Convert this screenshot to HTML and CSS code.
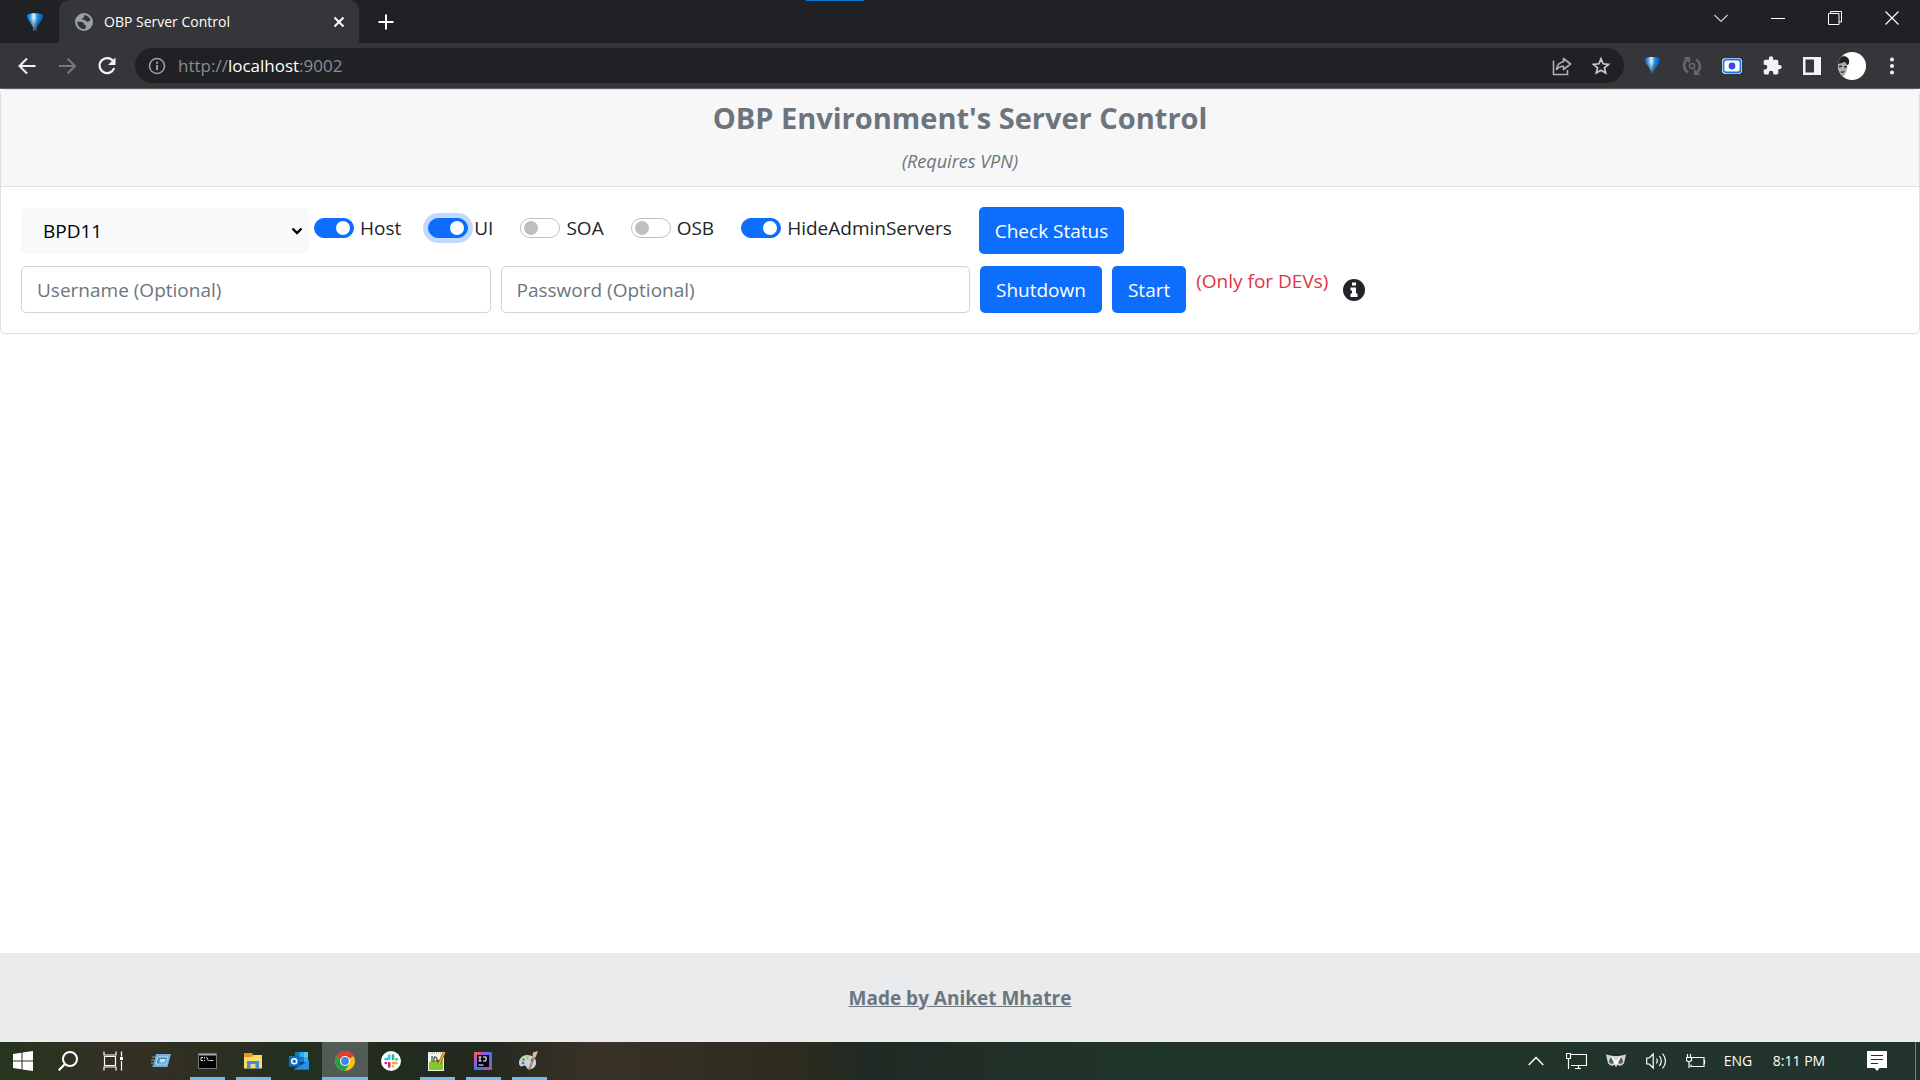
FILE: index.html
```html
<!DOCTYPE html>
<html lang="en">
<head>
<meta charset="utf-8">
<meta name="viewport" content="width=device-width, initial-scale=1">
<title>OBP Server Control</title>
<link rel="stylesheet" href="styles.css">
</head>
<body>
<svg class="defs" aria-hidden="true">
  <defs>
    <linearGradient id="balloon-fill" x1="0" x2="1" y1="0" y2="0">
      <stop offset="0" stop-color="#0a5fc0"/><stop offset=".2" stop-color="#2a9df0"/><stop offset=".42" stop-color="#e8f8ff"/><stop offset=".65" stop-color="#1b8fe8"/><stop offset="1" stop-color="#0757a8"/>
    </linearGradient>
    <linearGradient id="balloon-shade" x1="0" x2="0" y1="0" y2="1">
      <stop offset=".3" stop-color="#04264d" stop-opacity="0"/><stop offset="1" stop-color="#04264d" stop-opacity=".85"/>
    </linearGradient>
    <linearGradient id="idea-fill" x1="0" x2="1" y1="0" y2="1">
      <stop offset="0" stop-color="#f06a2c"/><stop offset=".3" stop-color="#b44fd0"/><stop offset=".55" stop-color="#2583f5"/><stop offset="1" stop-color="#e8368f"/>
    </linearGradient>
    <symbol id="balloon" viewBox="0 0 18 20">
      <path d="M1 3C3 .5 15 .5 17 3c.6 2.600-1.400 5.500-4 8.500L10.500 16v3h-3v-3L5 11.500C2.400 8.500.4 5.600 1 3z" fill="url(#balloon-fill)"/>
      <path d="M1 3C3 .5 15 .5 17 3c.6 2.600-1.400 5.500-4 8.500L10.500 16v3h-3v-3L5 11.500C2.400 8.500.4 5.600 1 3z" fill="url(#balloon-shade)"/>
    </symbol>
  </defs>
</svg>

<header class="browser">
  <div class="tab-strip">
    <button class="pinned-tab" aria-label="Pinned tab"><svg width="18" height="20"><use href="#balloon"/></svg></button>
    <div class="tab">
      <svg width="18" height="18" viewBox="0 0 18 18"><circle cx="9" cy="9" r="9" fill="#9aa0a6"/><path d="M9 2c3 .2 5.600 2.200 6.600 5-1.500.7-2.200 2-3.600 1.800-1.200-.2-.8-1.500-2-1.800-1.200-.2-2.600.2-2.800-1C7.100 4.900 9 5 9 3.800zM2.200 8.500c2 .3 5.200.2 6.300 1.200 1 1 .2 1.900 1.600 2.400 1.200.5 1.500 1.700-.1 3.900-4.200.4-7.800-2.900-7.800-7.500z" fill="#35363a"/></svg>
      <span class="tab-title">OBP Server Control</span>
      <button class="tab-close" aria-label="Close tab"><svg width="12" height="12" viewBox="0 0 12 12"><path d="M1.500 1.500l9 9M10.500 1.500l-9 9" stroke="#fff" stroke-width="2"/></svg></button>
    </div>
    <button class="new-tab" aria-label="New tab"><svg width="16" height="16" viewBox="0 0 16 16"><path d="M8 .5v15M.5 8h15" stroke="#fff" stroke-width="2"/></svg></button>
    <div class="window-buttons">
      <button aria-label="Search tabs"><svg width="14" height="14" viewBox="0 0 14 14"><path d="M.5 4L7 10.500 13.500 4" fill="none" stroke="#ccc" stroke-width="1.200"/></svg></button>
      <button aria-label="Minimize"><svg width="14" height="14" viewBox="0 0 14 14"><path d="M0 7.500h14" stroke="#fff"/></svg></button>
      <button aria-label="Restore"><svg width="14" height="14" viewBox="0 0 14 14"><path d="M.5 2.500h10.500v11H.5zM2.500 2.500v-2h11v10.500h-2.500" fill="none" stroke="#fff"/></svg></button>
      <button aria-label="Close window"><svg width="14" height="14" viewBox="0 0 14 14"><path d="M.5.5l13 13M13.500.5l-13 13" stroke="#fff" stroke-width="1.200"/></svg></button>
    </div>
    <span class="top-marker"></span>
  </div>

  <div class="toolbar">
    <button aria-label="Back"><svg width="24" height="24" viewBox="0 0 24 24"><path d="M20.500 12H5M12 4.500L4.500 12l7.500 7.500" fill="none" stroke="#f1f3f4" stroke-width="2"/></svg></button>
    <button aria-label="Forward"><svg width="24" height="24" viewBox="0 0 24 24"><path d="M4 12h15.500M12.500 4.500L20 12l-7.500 7.500" fill="none" stroke="#77787b" stroke-width="2"/></svg></button>
    <button aria-label="Reload"><svg width="24" height="24" viewBox="0 0 24 24"><path d="M18.200 7.200A7.500 7.500 0 1 0 19.200 14" fill="none" stroke="#f1f3f4" stroke-width="2.200"/><path d="M20.500 3.500V11H13z" fill="#f1f3f4"/></svg></button>
    <div class="omnibox">
      <svg width="18" height="18" viewBox="0 0 18 18"><circle cx="9" cy="9" r="7.500" fill="none" stroke="#9aa0a6" stroke-width="1.600"/><path d="M9 8v5M9 4.800v2" stroke="#9aa0a6" stroke-width="2"/></svg>
      <div class="url" role="textbox" aria-label="Address"><span>http://</span><b>localhost</b><span>:9002</span></div>
      <button aria-label="Share"><svg width="24" height="24" viewBox="0 0 24 24"><path d="M3.500 6.500v14h14v-4.500" fill="none" stroke="#aeb0b3" stroke-width="1.600"/><path d="M13.500 4.500l7 5.500-7 5.500v-3.300c-3.200 0-5.300 1-7 3.300.4-4.200 2.700-7 7-7.700z" fill="none" stroke="#aeb0b3" stroke-width="1.600" stroke-linejoin="round"/></svg></button>
      <button aria-label="Bookmark"><svg width="24" height="24" viewBox="0 0 24 24"><path d="M12 4.800l2.100 5 5.400.5-4.100 3.500 1.300 5.300-4.700-2.800-4.700 2.800 1.300-5.300-4.100-3.500 5.400-.5z" fill="none" stroke="#c6c8ca" stroke-width="1.700"/></svg></button>
    </div>
    <button aria-label="Balloon extension"><svg width="17" height="19"><use href="#balloon"/></svg></button>
    <button aria-label="Refresh extension"><svg width="24" height="24" viewBox="0 0 24 24"><g fill="none" stroke="#66676a" stroke-width="2.600"><path d="M8 18.500A8 8 0 0 1 6.500 6M16 5.500A8 8 0 0 1 17.500 18"/><circle cx="12" cy="12" r="2.500" stroke-width="1.600"/></g><path d="M3.500 3H10v6.500zM20.500 21H14v-6.500z" fill="#66676a"/></svg></button>
    <button aria-label="Recorder extension"><svg width="22" height="18" viewBox="0 0 22 18"><rect x="1" y="1" width="20" height="16" rx="4" fill="#fff"/><rect x="2.500" y="2.500" width="17" height="13" rx="3" fill="#fff" stroke="#1677f2" stroke-width="1.800"/><circle cx="11" cy="9" r="3.400" fill="#4747cf"/></svg></button>
    <button aria-label="Extensions"><svg width="24" height="24" viewBox="0 0 24 24"><path d="M20.500 11H19V7c0-1.100-.9-2-2-2h-4V3.500a2.500 2.500 0 0 0-5 0V5H4c-1.100 0-2 .9-2 2v3.800h1.500a2.700 2.700 0 0 1 0 5.400H2V20c0 1.100.9 2 2 2h3.800v-1.500a2.700 2.700 0 0 1 5.400 0V22H17c1.100 0 2-.9 2-2v-4h1.500a2.500 2.500 0 0 0 0-5z" fill="#f1f3f4" transform="translate(2 1.500) scale(.86)"/></svg></button>
    <button aria-label="Side panel"><svg width="18" height="18" viewBox="0 0 18 18"><path fill="#f1f3f4" fill-rule="evenodd" d="M0 0h18v18H0zM2.500 2.500v13H11v-13z"/></svg></button>
    <button aria-label="Profile"><svg width="28" height="28" viewBox="0 0 28 28"><clipPath id="avatar"><circle cx="14" cy="14" r="14"/></clipPath><g clip-path="url(#avatar)"><path fill="#fff" d="M0 0h28v28H0z"/><path d="M0 6c4-4 9-3 11 2 .6 4-1 5-2 5 .6 4 0 7-4 12L0 20z" fill="#aaa"/><path d="M0 7c4-4 9-3.500 11 1 .5 3-.5 5-2 5-1-3-3-4-5-2L0 12zM1 14l3-.5v1.500l-3 .3zM6 14h3v1.500H6zM2 20l5-1-2 2zM0 21l5 4H0z" fill="#222"/></g></svg></button>
    <button aria-label="Menu"><svg width="24" height="24" viewBox="0 0 24 24" fill="#f1f3f4"><circle cx="12" cy="5.500" r="2"/><circle cx="12" cy="12" r="2"/><circle cx="12" cy="18.500" r="2"/></svg></button>
  </div>
</header>

<main class="page">
  <section class="card">
    <div class="card-header">
      <h1>OBP Environment's Server Control</h1>
      <p>(Requires VPN)</p>
    </div>
    <form class="card-body">
      <div class="row">
        <div class="select-wrap">
          <select class="environment" aria-label="Environment"><option>BPD11</option></select>
          <svg class="select-arrow" width="12" height="8" viewBox="0 0 12 8"><path d="M1.500 1.500L6 6l4.500-4.500" fill="none" stroke="#000" stroke-width="2.400"/></svg>
        </div>
        <div class="switches">
          <label class="switch"><input type="checkbox" checked>Host</label>
          <label class="switch"><input type="checkbox" class="is-focused" checked>UI</label>
          <label class="switch"><input type="checkbox">SOA</label>
          <label class="switch"><input type="checkbox">OSB</label>
          <label class="switch"><input type="checkbox" checked>HideAdminServers</label>
        </div>
        <button type="button" class="btn">Check Status</button>
      </div>
      <div class="row credentials">
        <input class="field" type="text" placeholder="Username (Optional)" aria-label="Username">
        <input class="field" type="password" placeholder="Password (Optional)" aria-label="Password">
        <button type="button" class="btn">Shutdown</button>
        <button type="button" class="btn">Start</button>
        <span class="note">(Only for DEVs)</span>
        <button type="button" class="info" aria-label="Information"><svg width="22" height="22" viewBox="0 0 22 22"><circle cx="11" cy="11" r="11" fill="#212529"/><path d="M9 3.500h4v3H9zM7.500 8.500H13v6h1.500V18h-7v-3.500H9V11.500H7.500z" fill="#fff"/></svg></button>
      </div>
    </form>
  </section>
</main>

<footer class="page-footer"><a href="#">Made by Aniket Mhatre</a></footer>

<nav class="taskbar" aria-label="Taskbar">
  <div class="system-items">
    <button aria-label="Start menu"><svg width="20" height="20" viewBox="0 0 20 20"><path fill="#fff" d="M0 3l8.500-1.200v7.700H0zM9.500 1.600L20 0v9.500H9.500zM0 10.500h8.500v7.700L0 17zM9.500 10.500H20V20L9.500 18.400z"/></svg></button>
    <button aria-label="Search"><svg width="20" height="20" viewBox="0 0 20 20"><circle cx="12" cy="8" r="7" fill="none" stroke="#fff" stroke-width="2"/><path d="M7 13l-6.300 6.300" stroke="#fff" stroke-width="2.200"/></svg></button>
    <button aria-label="Task view"><svg width="20" height="20" viewBox="0 0 20 20"><path d="M1 .5v3.500h12V.5M1.500 5.500h11v9h-11zM1 19.500V16h12v3.500M18.500.5v5M18.500 10v9.500" fill="none" stroke="#fff" stroke-width="1.200"/><path d="M17 6h3v3h-3z" fill="#fff"/></svg></button>
  </div>
  <div class="apps">
    <button aria-label="Run"><svg width="20" height="16" viewBox="0 0 20 16"><path d="M1 4h4M0 7h5M0 10h4M1 13h3" stroke="#7fa9c8"/><path d="M5 1h15l-3.500 13H2z" fill="#78afd7"/><path d="M7 4h10l-2 7H5z" fill="#3d82bd" stroke="#b8dcf3"/><path d="M9 6h6l-1 3.500H8z" fill="#b8e0f8"/></svg></button>
    <button class="open" aria-label="Command Prompt"><svg width="19" height="16" viewBox="0 0 19 16"><path fill="#050505" stroke="#777" d="M.5.500h18v15H.5z"/><path fill="#aaa" d="M1 1h17v1.500H1z"/><path d="M5 4.500H3v3h2M6.500 4v1.500M6.500 7v1M8.500 4l2 4M11.500 7.500h4" fill="none" stroke="#ddd"/></svg></button>
    <button class="open" aria-label="File Explorer"><svg width="19" height="16" viewBox="0 0 19 16"><path fill="#d99a22" d="M0 0h8l1.500 2H18v5H0z"/><path fill="#ffd867" d="M0 4h8l1.500-2H18v13.500H0z"/><path fill="#3c93dd" d="M3 8h12v7.500h-3.500V11h-5v4.500H3z"/></svg></button>
    <button aria-label="Outlook"><svg width="20" height="18" viewBox="0 0 20 18"><path fill="#123f7a" d="M5 8h15v10H5z"/><path fill="#1378c8" d="M6 0h13v10H6z"/><path fill="#35a8ec" d="M10.500 0H15v5h-4.500zM15 5h4v5h-4z"/><path fill="#54cbf7" d="M15 0h4v5h-4z"/><path fill="#2394df" d="M5 17.500L20 8v9.500z"/><path fill="#0f6cbf" d="M0 4h10.500v10.500H0z"/><circle cx="5.200" cy="9.300" r="2.500" fill="none" stroke="#fff" stroke-width="1.500"/></svg></button>
    <button class="open active" aria-label="Chrome"><svg width="20" height="20" viewBox="0 0 20 20"><circle cx="10" cy="10" r="10" fill="#fbc116"/><path d="M10 10L1.340 5A10 10 0 0 1 18.660 5z" fill="#e33b2e"/><path d="M1.340 5A10 10 0 0 0 10 20l4.300-7.500L10 10H4.200z" fill="#2a9d4a"/><path d="M1.340 5L5.700 12.500 10 10V5z" fill="#2a9d4a"/><path d="M1.340 5A10 10 0 0 1 18.660 5H10L5.500 8z" fill="#e33b2e"/><circle cx="10" cy="10" r="5" fill="#fff"/><circle cx="10" cy="10" r="3.900" fill="#3f83f0"/></svg></button>
    <button aria-label="Slack"><svg width="20" height="20" viewBox="0 0 20 20"><circle cx="10" cy="10" r="10" fill="#fff"/><g fill="none" stroke-width="2.600" stroke-linecap="round"><path d="M8.200 4.500v3.300M4.500 8h3.200" stroke="#36c5f0"/><path d="M12 4.500v3.500M15.500 8.300h-.2" stroke="#2eb67d"/><path d="M12 12h3.500M12 15.500v-.2" stroke="#ecb22e"/><path d="M8.200 12v3.500M4.700 12h.2" stroke="#e01e5a"/></g></svg></button>
    <button class="open" aria-label="Notepad++"><svg width="18" height="20" viewBox="0 0 18 20"><path fill="#f5f5ed" d="M0 1h16v19H0z"/><path fill="#80cc28" d="M1 11l14-3v11H1z"/><path d="M2 2h12" stroke="#888" stroke-dasharray="1 1"/><path d="M4 5v6M6 6v5M6 6h2l1 2v3M10 9v2M12 9v2" fill="none" stroke="#222"/><path d="M16.500 1L11 13" stroke="#8d5a17" stroke-width="3"/><path d="M16.500 1L11 13" stroke="#f5b82c" stroke-width="1.600"/></svg></button>
    <button class="open" aria-label="IntelliJ IDEA"><svg width="18" height="18" viewBox="0 0 18 18"><path fill="url(#idea-fill)" d="M0 0h18v18H0z"/><path fill="#080510" d="M3 3h12v12H3z"/><path d="M4.500 5h3M6 5v4M4.500 9h3M9 5h3v3q0 1-1 1H9M4.500 13h5" fill="none" stroke="#fff" stroke-width="1.100"/></svg></button>
    <button class="open" aria-label="Paint"><svg width="20" height="20" viewBox="0 0 20 20"><path d="M8 4C3 4 0 8 0 12c0 3 2 4 4 3s3 0 4 2c1 3 8 1 9-4C18 7 13 4 8 4z" fill="#b8d7ea"/><circle cx="4.500" cy="8.500" r="1.500" fill="#69ad38"/><circle cx="8.500" cy="6.500" r="1.500" fill="#edb82d"/><circle cx="4" cy="12" r="1.300" fill="#d83e34"/><circle cx="13" cy="9" r="1.500" fill="#2581bd"/><path d="M10 19l5-13" stroke="#c87426" stroke-width="2"/><path d="M13.500 6L14 1.500 19 0l-2.500 6.500z" fill="#dbc09a"/></svg></button>
  </div>
  <div class="tray">
    <button aria-label="Show hidden icons"><svg width="16" height="10" viewBox="0 0 16 10"><path d="M.7 9L8 1.500 15.300 9" fill="none" stroke="#fff" stroke-width="1.400"/></svg></button>
    <button aria-label="Network"><svg width="21" height="18" viewBox="0 0 21 18"><path d="M5 2.500h15.500v11H5M9 16.500h6M12.500 13.500v3M.5 1.500h4v5h-4zM2.500 6.500V17" fill="none" stroke="#fff" stroke-width="1.200"/></svg></button>
    <button aria-label="Owl utility"><svg width="20" height="14" viewBox="0 0 20 14"><path d="M0 .5L7 2h6l7-1.500-2 9q-4 4-6.500 1L10 13.500 8.500 10.500Q6 13.500 2 9.500z" fill="#d0d5d2"/><path d="M4 4q4 0 5 5-5 2-6-1zM16 4q-4 0-5 5 5 2 6-1z" fill="#53605a"/><path d="M5 2l5 5 5-5-3.500 8.500h-3z" fill="#fff"/></svg></button>
    <button aria-label="Volume"><svg width="21" height="18" viewBox="0 0 21 18"><path d="M.7 6h2.500l4-4v14l-4-4H.7zM10.500 6.500q1.500 2.500 0 5M13.500 4q3.500 5 0 10M16.500 1.500q6 7.500 0 15" fill="none" stroke="#fff" stroke-width="1.200"/></svg></button>
    <button aria-label="Battery"><svg width="20" height="14" viewBox="0 0 20 14"><path d="M6 3.500h12v9H5v-2M18.500 6v4M1.500 0v3M4.500 0v3M.5 3.500h5v3l-1.500 1h-2l-1.500-1zM3 7.500V14" fill="none" stroke="#fff" stroke-width="1.200"/></svg></button>
    <button class="language">ENG</button>
    <button class="clock">8:11 PM</button>
    <button class="notifications" aria-label="Notifications"><svg width="20" height="20" viewBox="0 0 20 20"><path fill="#fff" d="M0 0h20v17h-7.500L10 20l-2.500-3H0z"/><path d="M4 4.500h12M4 8.500h12M4 12.500h7" stroke="#233029" stroke-width="1.200"/></svg></button>
  </div>
</nav>
</body>
</html>
```
FILE: styles.css
```css
* { box-sizing: border-box; }

body {
  margin: 0;
  min-height: 100vh;
  display: flex;
  flex-direction: column;
  background: #fff;
  color: #212529;
  font: 19px/30px "Segoe UI", "Open Sans", "Noto Sans", sans-serif;
}

button {
  border: 0;
  padding: 0;
  background: none;
  color: inherit;
  font: inherit;
}

svg { display: block; flex: none; }
.defs { position: absolute; width: 0; height: 0; }

/* Browser frame */
.browser { background: #35363a; color: #fff; border-bottom: 1px solid #5f6063; }

.tab-strip {
  position: relative;
  display: flex;
  height: 43px;
  background: #202124;
}
.top-marker {
  position: absolute;
  top: 0;
  left: 42%;
  width: 58px;
  height: 1px;
  background: #0078d7;
}
.pinned-tab {
  width: 59px;
  padding-left: 11px;
  display: grid;
  place-items: center;
  border-radius: 0 0 10px 0;
  background: #202124;
}
.tab {
  width: 300px;
  display: flex;
  align-items: center;
  gap: 11px;
  padding: 0 14px 0 16px;
  border-radius: 10px 10px 0 0;
  background: #35363a;
  font-size: 14px;
}
.tab-title { flex: 1; }
.new-tab { width: 54px; display: grid; place-items: center; }
.window-buttons { display: flex; margin-left: auto; height: 36px; }
.window-buttons button { width: 57px; display: grid; place-items: center; }

.toolbar {
  display: flex;
  align-items: center;
  gap: 16px;
  height: 45px;
  padding: 0 16px 0 15px;
}
.toolbar button {
  width: 24px;
  height: 28px;
  display: flex;
  align-items: center;
  justify-content: center;
}
.omnibox {
  flex: 1;
  display: flex;
  align-items: center;
  gap: 15px;
  height: 35px;
  padding: 0 11px 0 13px;
  border-radius: 18px;
  background: #202124;
}
.url { flex: 1; margin-left: -3px; color: #8b8d90; font-size: 17px; }
.url b { color: #fff; font-weight: 400; }

/* Page */
.page { flex: 1; }
.card { border: 1px solid #dfdfdf; border-radius: 5px; overflow: hidden; }
.card-header {
  padding: 10px 20px;
  border-bottom: 1px solid #dfdfdf;
  background: #f7f7f7;
  color: #6c757d;
  text-align: center;
}
.card-header h1 { margin: 0 0 10px; font-size: 29px; line-height: 36px; font-weight: 700; }
.card-header p { margin: 0; font-size: 18px; font-style: italic; }

.card-body { padding: 20px; display: grid; gap: 12px; }
.row { display: flex; }
.select-wrap { position: relative; width: 288px; display: flex; align-items: center; }
.environment {
  appearance: none;
  width: 100%;
  height: 46px;
  padding: 0 22px;
  border: 0;
  border-radius: 5px;
  background: #f8f9fa;
  color: #000;
  font: inherit;
}
.select-arrow { position: absolute; right: 6px; pointer-events: none; }

.switches { display: flex; margin-left: 5px; padding-top: 6px; }
.switch { display: flex; align-items: center; gap: 6px; height: 30px; padding-right: 27px; }
.switch input {
  appearance: none;
  display: flex;
  align-items: center;
  width: 40px;
  height: 20px;
  margin: 0;
  padding: 0 3px;
  border: 1px solid #bfbfbf;
  border-radius: 10px;
  background: #fff;
}
.switch input::before {
  content: "";
  width: 14px;
  height: 14px;
  border-radius: 50%;
  background: #bfbfbf;
}
.switch input:checked { justify-content: flex-end; border-color: #0d6efd; background: #0d6efd; }
.switch input:checked::before { background: #fff; }
.switch .is-focused { box-shadow: 0 0 0 5px #c2daff; }

.btn {
  height: 47px;
  padding: 0 16px;
  border-radius: 5px;
  background: #0d6efd;
  color: #fff;
}

.credentials { gap: 10px; }
.field {
  flex: 0 0 25%;
  width: 25%;
  height: 47px;
  padding: 0 15px;
  border: 1px solid #ced4da;
  border-radius: 5px;
  background: #fff;
  font: inherit;
}
.field::placeholder { color: #6c757d; opacity: 1; }
.note { color: #dc3545; }
.info { margin-left: 5px; }

.page-footer {
  display: grid;
  place-items: center;
  height: 89px;
  background: #e9ebed;
  font-weight: 700;
}
.page-footer a { color: #6c757d; }

/* Taskbar */
.taskbar {
  display: flex;
  height: 38px;
  background: linear-gradient(90deg, #27351f 0, #352f24 7%, #22301f 16%, #22291f 25%, #3a3226 31%, #2b2b1e 42%, #202a24 45%, #20352a 60%, #22332b 100%);
  color: #fff;
  font-size: 14px;
}
.taskbar button { display: grid; place-items: center; }
.system-items, .apps { display: flex; }
.system-items { margin-right: 3px; }
.system-items button { width: 45px; }
.apps button { position: relative; width: 46px; }
.apps .open::after {
  content: "";
  position: absolute;
  bottom: 0;
  width: 35px;
  height: 3px;
  background: #76b9ed;
}
.apps .active { background: #505c55; }
.apps .active::after { width: 100%; }
.tray { display: flex; margin-left: auto; padding-right: 4px; }
.tray button { width: 40px; }
.tray .language { width: 44px; }
.tray .clock { width: 78px; }
.tray .notifications { width: 78px; border-right: 1px solid #75817b; }
```
